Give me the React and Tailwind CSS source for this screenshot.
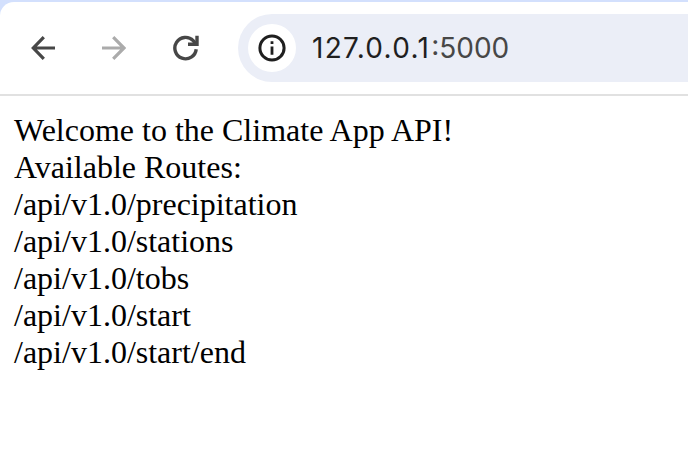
const routes = [
  '/api/v1.0/precipitation',
  '/api/v1.0/stations',
  '/api/v1.0/tobs',
  '/api/v1.0/start',
  '/api/v1.0/start/end',
];

function Back() {
  return (
    <svg className="size-6 text-[#474747]" viewBox="0 0 24 24" fill="none" stroke="currentColor" strokeWidth="3.2">
      <path d="M24 12H2.7M12.8 1.2 2.3 12l10.5 10.8" />
    </svg>
  );
}

function Forward() {
  return (
    <svg className="size-6 text-[#ababab]" viewBox="0 0 24 24" fill="none" stroke="currentColor" strokeWidth="3.2">
      <path d="M0 12h21.5M11.2 1.2 22 12 11.2 22.8" />
    </svg>
  );
}

function Reload() {
  return (
    <svg className="h-[26px] w-[26px] text-[#474747]" viewBox="0 0 26 26" fill="none" stroke="currentColor" strokeWidth="3.4">
      <path d="M23.2 14.2A10.7 10.7 0 1 1 20.2 5.6L23 9" />
      <path d="M24 .8V9.3H15" />
    </svg>
  );
}

function Info() {
  return (
    <svg className="size-7 text-[#1f1f1f]" viewBox="0 0 28 28" fill="none" stroke="currentColor">
      <circle cx="14" cy="14" r="12.1" strokeWidth="3" />
      <path d="M14 12.6v8.2M14 7.2v2.8" strokeWidth="2.8" />
    </svg>
  );
}

export default function App() {
  return (
    <div className="flex h-[476px] w-[688px] flex-col overflow-hidden bg-white">
      <header className="border-b-2 border-[#e1e1e1] bg-[#d3e0fd] pt-0.5">
        <div className="flex h-[92px] items-center rounded-tl-[14px] bg-white pl-[30.5px]">
          <Back />
          <div className="ml-[47px] flex"><Forward /></div>
          <div className="ml-[47.5px] flex"><Reload /></div>
          <div className="ml-[39px] flex h-[68px] flex-1 items-center rounded-l-full bg-[#ebeef7] pl-2.5">
            <span className="flex size-12 items-center justify-center rounded-full bg-white">
              <Info />
            </span>
            <span className="ml-4 font-['Inter',sans-serif] text-[28px] leading-none text-[#1f1f1f]">
              <span className="tracking-[1.3px]">127.0.0.1</span>
              <span className="ml-px text-[#474747]">:5000</span>
            </span>
          </div>
        </div>
      </header>
      <main className="pt-4 pl-3.5 font-['Liberation_Serif',serif] text-[32px] leading-[37px] whitespace-nowrap text-black">
        <p>Welcome to the Climate App API!</p>
        <p>Available Routes:</p>
        {routes.map((route) => (
          <p key={route}>{route}</p>
        ))}
      </main>
    </div>
  );
}
